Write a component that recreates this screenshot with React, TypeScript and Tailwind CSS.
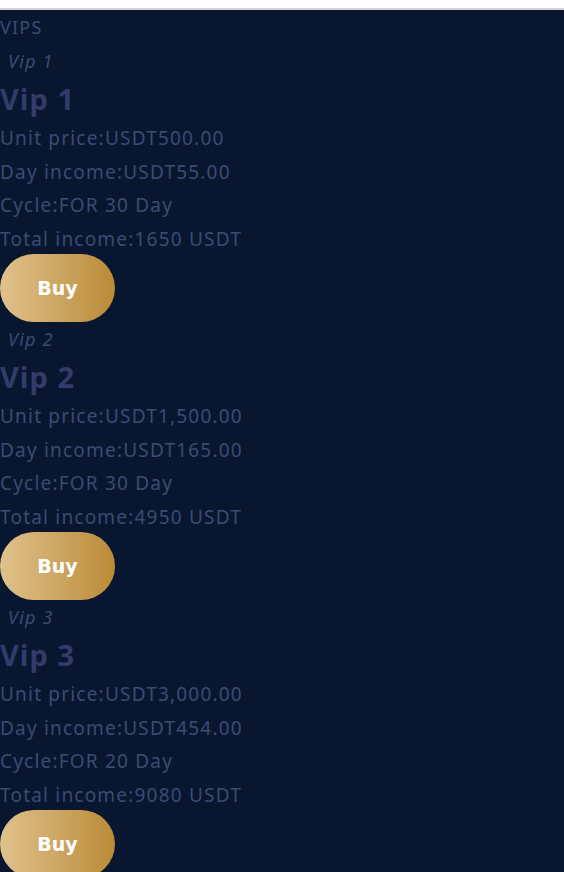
import React from "react";

const vips = [
  { n: 1, price: "USDT500.00", day: "USDT55.00", cycle: "FOR 30 Day", total: "1650 USDT" },
  { n: 2, price: "USDT1,500.00", day: "USDT165.00", cycle: "FOR 30 Day", total: "4950 USDT" },
  { n: 3, price: "USDT3,000.00", day: "USDT454.00", cycle: "FOR 20 Day", total: "9080 USDT" },
];

export default function App() {
  return (
    <div className="w-[564px] h-[872px] overflow-hidden bg-white" style={{ fontFamily: '"Noto Sans", sans-serif' }}>
      <div className="h-[8px] bg-white" />
      <div className="h-[2px] bg-[#d4d4d4]" />
      <div className="bg-[#08172f] min-h-[862px] text-[#3d4a72] tracking-[1.2px]">
        <div className="h-[34px] pt-[5px] text-[18px] leading-[24px]">VIPS</div>
        {vips.map((v) => (
          <div key={v.n} className="flex flex-col">
            <div className="pl-[8px] h-[34px] text-[18px] leading-[34px] italic">Vip {v.n}</div>
            <div className="h-[42px] text-[29px] leading-[42px] font-bold text-[#323c6b] tracking-[1px]">Vip {v.n}</div>
            <div className="h-[33.5px] pt-[2px] text-[19px] leading-[33.5px]">Unit price:{v.price}</div>
            <div className="h-[33.5px] pt-[2px] text-[19px] leading-[33.5px]">Day income:{v.day}</div>
            <div className="h-[33.5px] pt-[2px] text-[19px] leading-[33.5px]">Cycle:{v.cycle}</div>
            <div className="h-[33.5px] pt-[2px] text-[19px] leading-[33.5px]">Total income:{v.total}</div>
            <div>
              <button
                className="w-[115px] h-[68px] rounded-full bg-gradient-to-r from-[#dfc28c] to-[#bb8a35] text-white text-[19px] font-bold tracking-normal"
                style={{ fontFamily: '"DejaVu Sans", sans-serif' }}
              >
                Buy
              </button>
            </div>
          </div>
        ))}
      </div>
    </div>
  );
}
